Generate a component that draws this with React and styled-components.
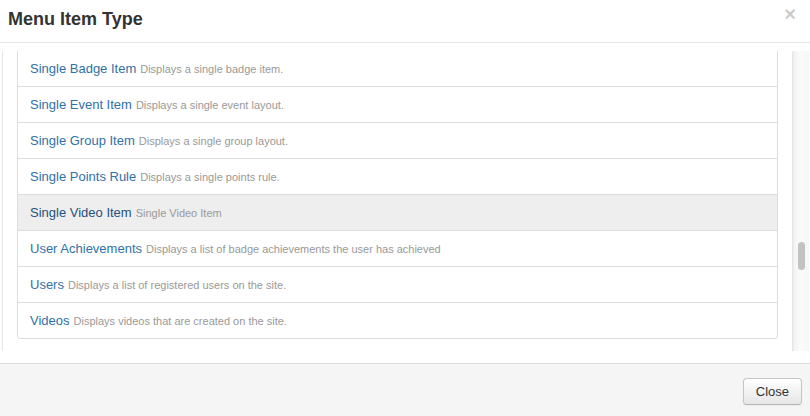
import styled, { createGlobalStyle } from 'styled-components'

const items = [
  ['Single Badge Item', 'Displays a single badge item.'],
  ['Single Event Item', 'Displays a single event layout.'],
  ['Single Group Item', 'Displays a single group layout.'],
  ['Single Points Rule', 'Displays a single points rule.'],
  ['Single Video Item', 'Single Video Item'],
  ['User Achievements', 'Displays a list of badge achievements the user has achieved'],
  ['Users', 'Displays a list of registered users on the site.'],
  ['Videos', 'Displays videos that are created on the site.'],
]

const current = 'Single Video Item'

export default function App() {
  return (
    <>
      <GlobalStyle />
      <Modal>
        <Header>
          <Title>Menu Item Type</Title>
          <CloseX type="button">×</CloseX>
        </Header>
        <Body>
          <Viewport>
            <Panel>
              <List>
                {items.map(([name, desc]) => (
                  <Row key={name} $active={name === current}>
                    <ItemName $active={name === current}>{name}</ItemName>
                    <ItemDesc>{desc}</ItemDesc>
                  </Row>
                ))}
              </List>
            </Panel>
            <Track $offset={191}>
              <Thumb />
            </Track>
          </Viewport>
        </Body>
        <Footer>
          <Button type="button">Close</Button>
        </Footer>
      </Modal>
    </>
  )
}

const GlobalStyle = createGlobalStyle`
  html, body {
    margin: 0;
    background: #fff;
    font-family: "Liberation Sans", Helvetica, Arial, sans-serif;
    color: #333;
  }
`

const Modal = styled.div`
  width: 810px;
  height: 416px;
  display: flex;
  flex-direction: column;
  background: #fff;
  overflow: hidden;
`

const Header = styled.div`
  height: 42px;
  flex: none;
  display: flex;
  justify-content: space-between;
  align-items: flex-start;
  padding: 0 14px 0 8px;
  border-bottom: 1px solid #e5e5e5;
`

const Title = styled.h3`
  margin: 8px 0 0;
  font-size: 18px;
  line-height: 22px;
  font-weight: bold;
  color: #333;
`

const CloseX = styled.button`
  margin-top: 4px;
  padding: 0;
  border: 0;
  background: none;
  font-family: "Liberation Sans", Arial, sans-serif;
  font-size: 20px;
  font-weight: bold;
  line-height: 20px;
  color: #000;
  opacity: 0.2;
  cursor: pointer;
`

const Body = styled.div`
  height: 320px;
  flex: none;
  padding: 8px 1px 12px 2px;
  box-sizing: border-box;
`

const Viewport = styled.div`
  height: 300px;
  display: flex;
  overflow: hidden;
`

/* the open accordion panel, scrolled so only its lower part shows */
const Panel = styled.div`
  flex: 1;
  padding: 0 14px 12px;
  border-left: 1px solid #e5e5e5;
  border-right: 1px solid #e5e5e5;
`

const Track = styled.div`
  width: 16px;
  flex: none;
  padding-top: ${p => p.$offset}px;
  box-sizing: border-box;
  border-left: 1px solid #ededed;
  background: linear-gradient(to right, #f3f3f3, #fbfbfb 45%, #f6f6f6);
`

const Thumb = styled.div`
  width: 7px;
  height: 28px;
  margin-left: 4px;
  border-radius: 4px;
  background: #c2c2c2;
`

const List = styled.ul`
  list-style: none;
  margin: 0;
  padding: 0;
  border: 1px solid #ddd;
  border-top: 0;
  border-radius: 0 0 4px 4px;
  overflow: hidden;
`

const Row = styled.li`
  height: 35px;
  display: flex;
  align-items: center;
  gap: 4px;
  padding: 0 12px;
  border-top: 1px solid #ddd;
  background: ${p => (p.$active ? '#eee' : '#fff')};
  white-space: nowrap;

  &:first-child {
    border-top: 0;
  }
`

const ItemName = styled.a`
  font-size: 13px;
  color: ${p => (p.$active ? '#24527d' : '#3071a9')};
  text-decoration: none;
`

const ItemDesc = styled.small`
  font-size: 11px;
  color: #999;
  margin-top: 1px;
`

const Footer = styled.div`
  flex: 1;
  display: flex;
  justify-content: flex-end;
  align-items: flex-start;
  padding: 14px 8px 0;
  background: #f5f5f5;
  border-top: 1px solid #ddd;
`

const Button = styled.button`
  height: 27px;
  padding: 0 12px;
  font-family: "Liberation Sans", Helvetica, Arial, sans-serif;
  font-size: 13px;
  line-height: 25px;
  color: #333;
  background: linear-gradient(to bottom, #fff, #e6e6e6);
  border: 1px solid #c5c5c5;
  border-bottom-color: #b3b3b3;
  border-radius: 4px;
  box-shadow: inset 0 1px 0 rgba(255, 255, 255, 0.2), 0 1px 2px rgba(0, 0, 0, 0.05);
  cursor: pointer;
`
